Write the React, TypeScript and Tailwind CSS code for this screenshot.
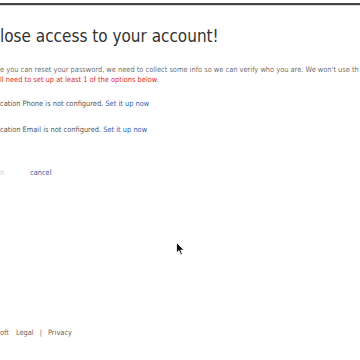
export default function App() {
  const f = { fontFamily: '"DejaVu Sans Condensed", "DejaVu Sans", sans-serif' };
  return (
    <div className="relative bg-white w-[360px] h-[360px] overflow-hidden" style={f}>
      <div className="h-[3px]" />
      <div className="h-[2px] bg-[#444444]" />
      <div className="h-[1px] bg-[#d4d4d4]" />
      <h1 className="mt-[20px] text-[17px] leading-[20px] text-[#333333] whitespace-nowrap">
        lose access to your account!
      </h1>
      <div className="mt-[19px] text-[7.4px] leading-[10px] whitespace-nowrap">
        <p className="text-[#707070]">
          e you can reset your password, we need to collect some info so we can verify who you are. We won't use th
        </p>
        <p className="text-[#e02b2b]">ll need to set up at least 1 of the options below.</p>
        <p className="mt-[14px] text-[#555555]">
          cation Phone is not configured. <a className="text-[#2b5fb4]">Set it up now</a>
        </p>
        <p className="mt-[16px] text-[#555555]">
          cation Email is not configured. <a className="text-[#2b5fb4]">Set it up now</a>
        </p>
        <div className="mt-[33px] flex items-center">
          <span className="w-[30px] text-[#c8cedb]">n</span>
          <a className="text-[#3a62b0]">cancel</a>
        </div>
      </div>
      <div className="mt-[150px] flex items-center text-[7.4px] leading-[10px] text-[#666666] whitespace-nowrap">
        <span>oft</span>
        <span className="ml-[7px]">Legal</span>
        <span className="ml-[6px]">|</span>
        <span className="ml-[6px]">Privacy</span>
      </div>
      <svg className="absolute left-[176px] top-[242px]" width="9" height="14" viewBox="0 0 9 14">
        <path d="M0.5 0.5 L0.5 11 L3 8.6 L4.8 12.8 L6.4 12.1 L4.7 8.1 L8 8.1 Z" fill="#111" stroke="#fff" strokeWidth="0.8" />
      </svg>
    </div>
  );
}
